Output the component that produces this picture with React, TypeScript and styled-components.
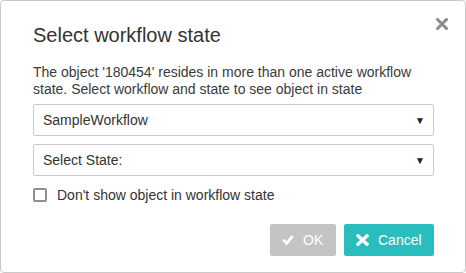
import React from "react";
import styled, { createGlobalStyle } from "styled-components";

const Global = createGlobalStyle`
  html, body { margin: 0; padding: 0; background: #fff; }
  body { font-family: "Liberation Sans", Arial, sans-serif; }
  * { box-sizing: border-box; }
`;

const Dialog = styled.div`
  position: relative;
  width: 466px;
  height: 273px;
  border: 1px solid #c9c9c9;
  border-radius: 4px;
  background: #fff;
  padding: 22px 32px 0 32px;
  color: #333;
`;

const Close = styled.button`
  position: absolute;
  top: 16px;
  right: 16px;
  width: 14px;
  height: 14px;
  padding: 0;
  border: 0;
  background: none;
  display: flex;
  align-items: center;
  justify-content: center;
  cursor: pointer;
`;

const Title = styled.h1`
  margin: 0;
  font-size: 20px;
  line-height: 24px;
  font-weight: normal;
  color: #333;
`;

const Message = styled.p`
  margin: 17px 0 0 0;
  font-size: 14px;
  line-height: 17px;
  color: #3a3a3a;
`;

const SelectBox = styled.div<{ $first?: boolean }>`
  margin-top: ${(p) => (p.$first ? "6px" : "8px")};
  height: 32px;
  width: 401px;
  border: 1px solid #ccc;
  border-radius: 2px;
  display: flex;
  align-items: center;
  justify-content: space-between;
  padding: 0 8px 0 9px;
  font-size: 14px;
  color: #333;
`;

const Arrow = styled.span`
  font-size: 10px;
  color: #222;
`;

const CheckRow = styled.label`
  margin-top: 11px;
  display: flex;
  align-items: center;
  gap: 10px;
  font-size: 14px;
  color: #333;
  height: 16px;
`;

const CheckBox = styled.span`
  width: 14px;
  height: 14px;
  border: 2px solid #8e8e8e;
  border-radius: 2px;
`;

const Footer = styled.div`
  margin-top: 21px;
  width: 401px;
  display: flex;
  justify-content: flex-end;
  gap: 8px;
`;

const Button = styled.button<{ $variant: "disabled" | "primary" }>`
  height: 32px;
  border: 0;
  border-radius: 2px;
  display: flex;
  align-items: center;
  gap: 9px;
  padding: 0 12px 0 12px;
  font-family: "Liberation Sans", Arial, sans-serif;
  font-size: 14px;
  color: #fff;
  background: ${(p) => (p.$variant === "primary" ? "#29bebd" : "#c4c4c4")};
  width: ${(p) => (p.$variant === "primary" ? "90px" : "66px")};
`;

export default function App() {
  return (
    <>
      <Global />
      <Dialog>
        <Close aria-label="Close">
          <svg width="12" height="12" viewBox="0 0 12 12">
            <path d="M1.5 1.5 L10.5 10.5 M10.5 1.5 L1.5 10.5" stroke="#8a8a8a" strokeWidth="3" strokeLinecap="square" />
          </svg>
        </Close>
        <Title>Select workflow state</Title>
        <Message>
          The object '180454' resides in more than one active workflow state. Select workflow and state to see object in state
        </Message>
        <SelectBox $first>
          <span>SampleWorkflow</span>
          <Arrow>▼</Arrow>
        </SelectBox>
        <SelectBox>
          <span>Select State:</span>
          <Arrow>▼</Arrow>
        </SelectBox>
        <CheckRow>
          <CheckBox />
          <span>Don't show object in workflow state</span>
        </CheckRow>
        <Footer>
          <Button $variant="disabled">
            <svg width="12" height="11" viewBox="0 0 12 11">
              <path d="M0.3 5.8 L2.6 3.8 L4.6 6.3 L9.4 0.2 L11.7 2.1 L4.7 10.6 Z" fill="#fff" />
            </svg>
            OK
          </Button>
          <Button $variant="primary">
            <svg width="13" height="12" viewBox="0 0 13 12">
              <path d="M2 1.8 L11 10.2 M11 1.8 L2 10.2" stroke="#fff" strokeWidth="3.4" strokeLinecap="square" />
            </svg>
            Cancel
          </Button>
        </Footer>
      </Dialog>
    </>
  );
}
